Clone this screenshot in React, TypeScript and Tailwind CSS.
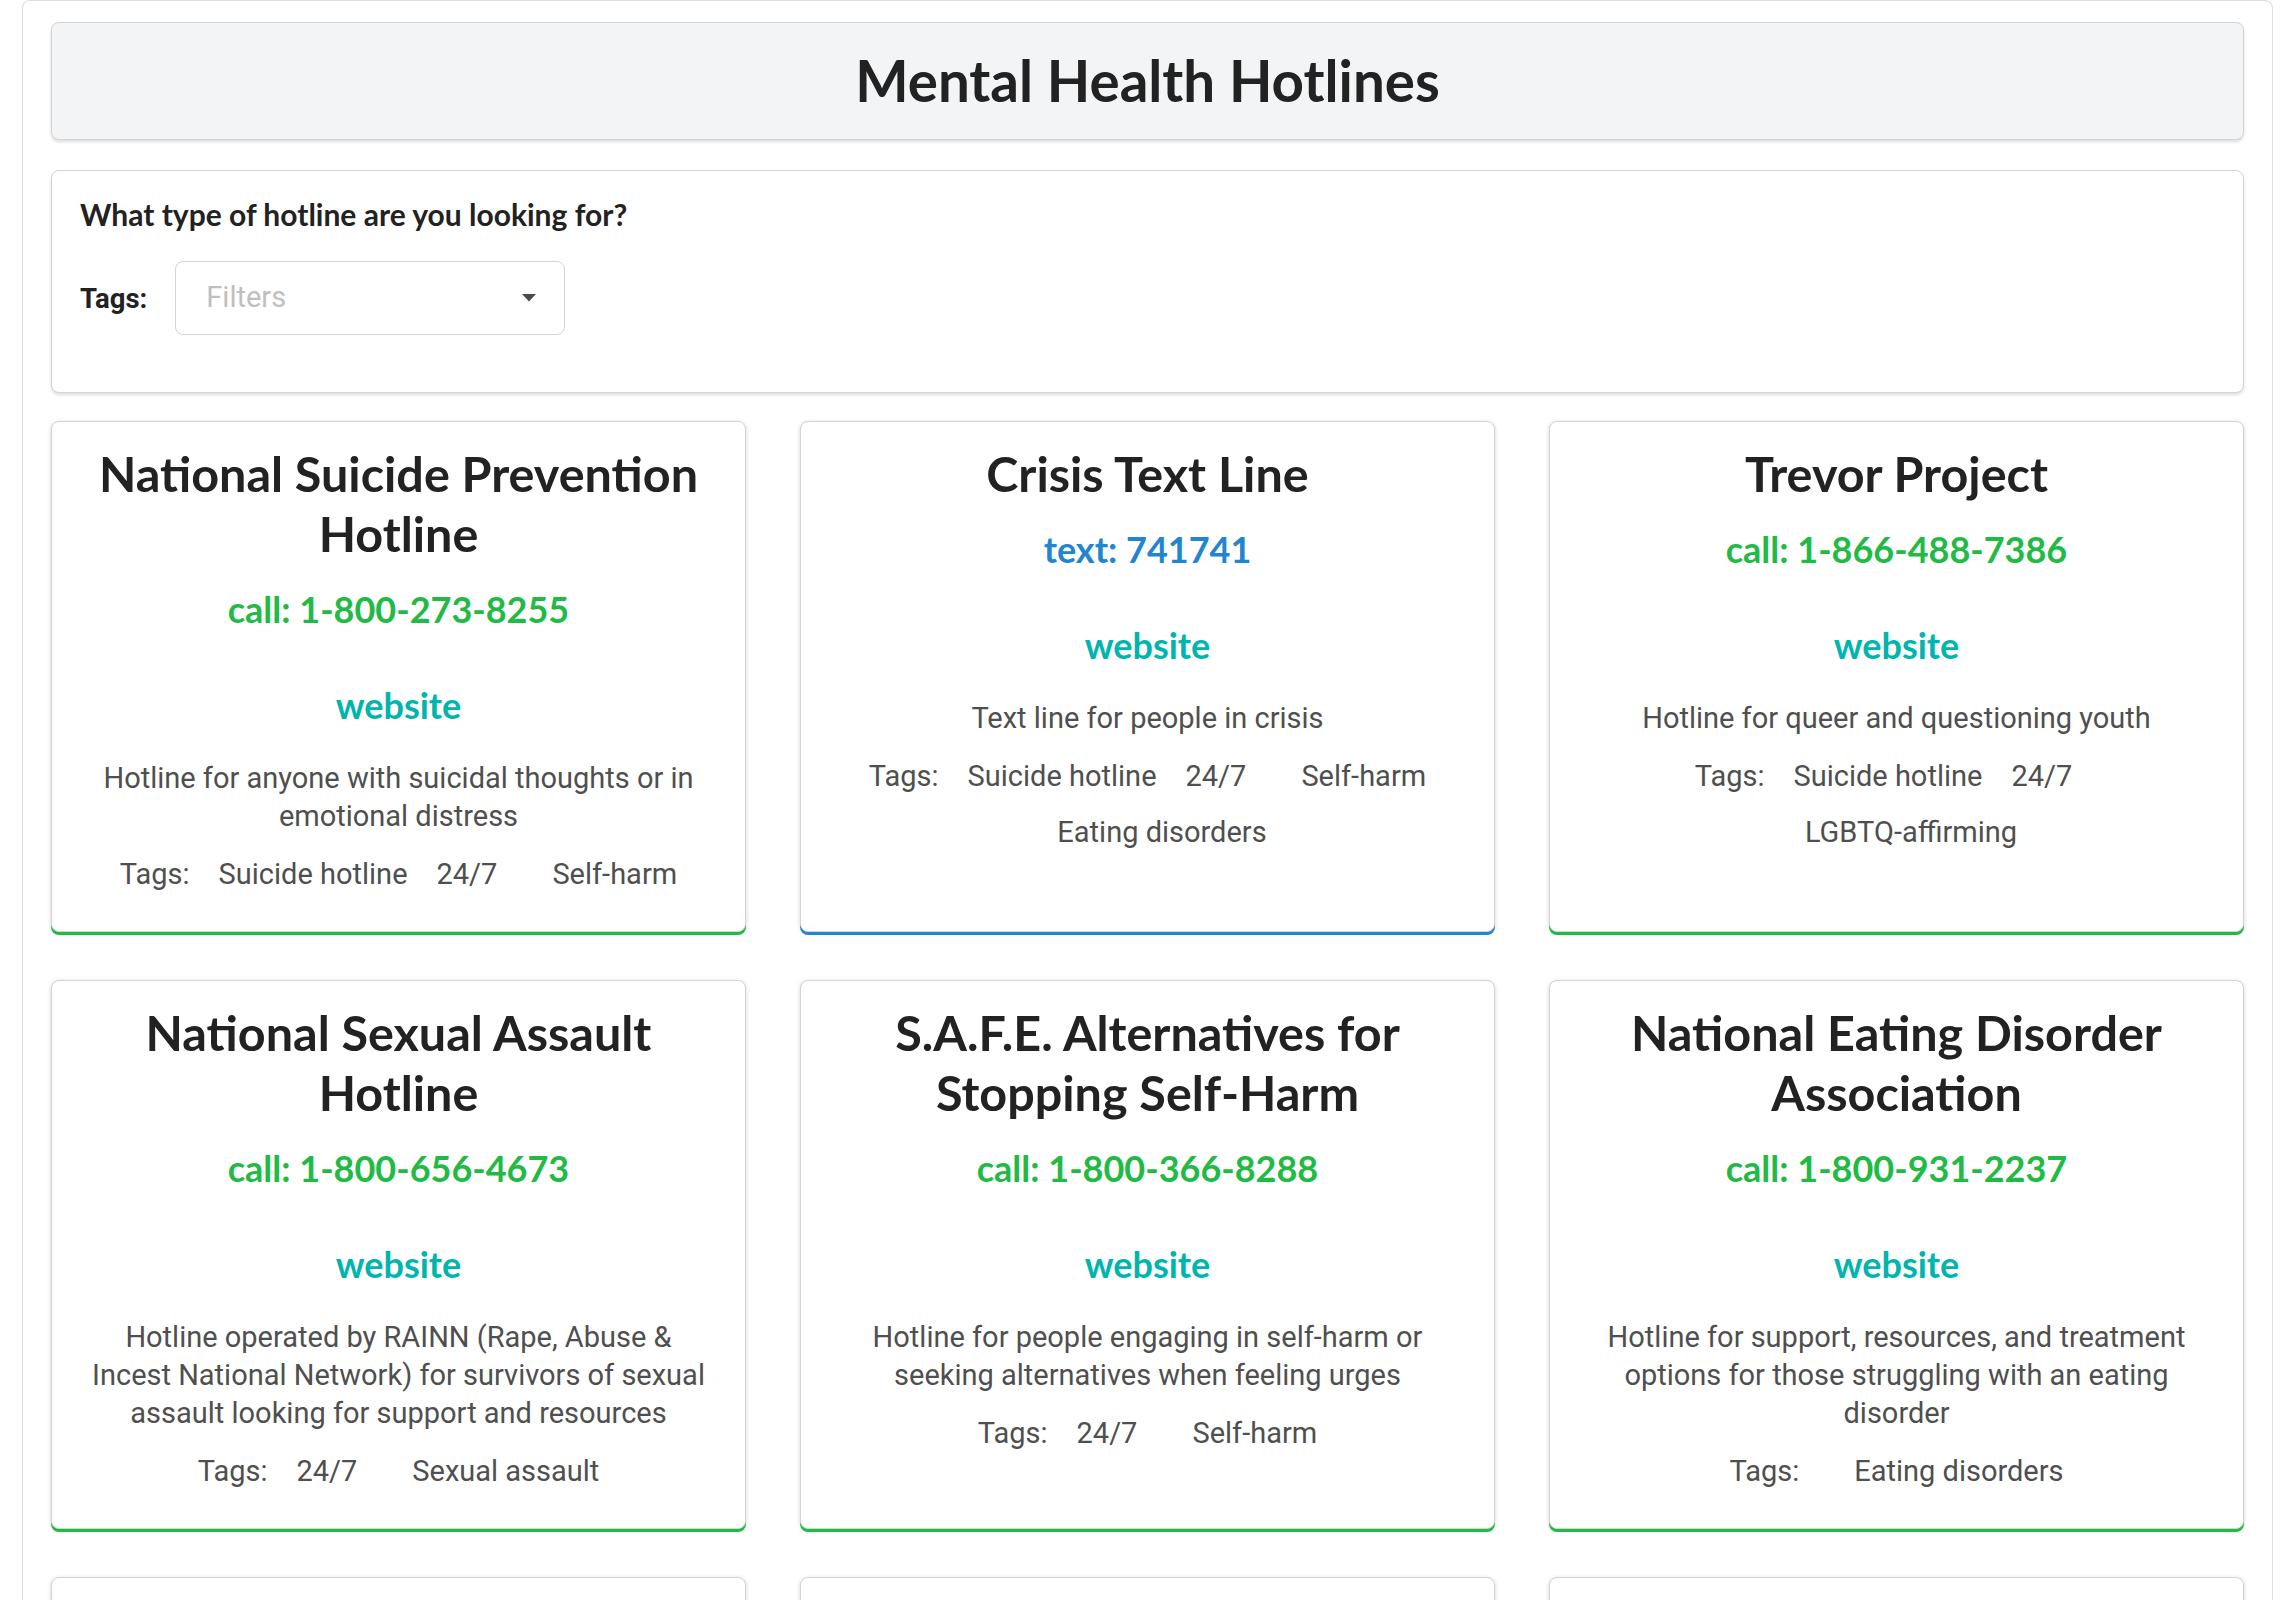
import React from "react";

type Tag = { t: string; cls: string };
type Hotline = {
  title: string[];
  contactLabel: string;
  contactClass: string;
  desc: string[];
  tagRows: Tag[][];
  accent: string;
};

const cards: Hotline[] = [
  {
    title: ["National Suicide Prevention", "Hotline"],
    contactLabel: "call: 1-800-273-8255",
    contactClass: "text-[#21ba45]",
    desc: ["Hotline for anyone with suicidal thoughts or in", "emotional distress"],
    tagRows: [
      [
        { t: "Tags:", cls: "" },
        { t: "Suicide hotline", cls: "ml-[29px]" },
        { t: "24/7", cls: "ml-[29px] mr-[26px]" },
        { t: "Self-harm", cls: "ml-[29px]" },
      ],
    ],
    accent: "shadow-[0_3px_0_0_#21ba45,0_1px_4px_0_#d4d4d5]",
  },
  {
    title: ["Crisis Text Line"],
    contactLabel: "text: 741741",
    contactClass: "text-[#2185d0]",
    desc: ["Text line for people in crisis"],
    tagRows: [
      [
        { t: "Tags:", cls: "" },
        { t: "Suicide hotline", cls: "ml-[29px]" },
        { t: "24/7", cls: "ml-[29px] mr-[26px]" },
        { t: "Self-harm", cls: "ml-[29px]" },
      ],
      [{ t: "Eating disorders", cls: "ml-[29px]" }],
    ],
    accent: "shadow-[0_3px_0_0_#2185d0,0_1px_4px_0_#d4d4d5]",
  },
  {
    title: ["Trevor Project"],
    contactLabel: "call: 1-866-488-7386",
    contactClass: "text-[#21ba45]",
    desc: ["Hotline for queer and questioning youth"],
    tagRows: [
      [
        { t: "Tags:", cls: "" },
        { t: "Suicide hotline", cls: "ml-[29px]" },
        { t: "24/7", cls: "ml-[29px] mr-[26px]" },
      ],
      [{ t: "LGBTQ-affirming", cls: "ml-[29px]" }],
    ],
    accent: "shadow-[0_3px_0_0_#21ba45,0_1px_4px_0_#d4d4d5]",
  },
  {
    title: ["National Sexual Assault", "Hotline"],
    contactLabel: "call: 1-800-656-4673",
    contactClass: "text-[#21ba45]",
    desc: [
      "Hotline operated by RAINN (Rape, Abuse &",
      "Incest National Network) for survivors of sexual",
      "assault looking for support and resources",
    ],
    tagRows: [
      [
        { t: "Tags:", cls: "" },
        { t: "24/7", cls: "ml-[29px] mr-[26px]" },
        { t: "Sexual assault", cls: "ml-[29px]" },
      ],
    ],
    accent: "shadow-[0_3px_0_0_#21ba45,0_1px_4px_0_#d4d4d5]",
  },
  {
    title: ["S.A.F.E. Alternatives for", "Stopping Self-Harm"],
    contactLabel: "call: 1-800-366-8288",
    contactClass: "text-[#21ba45]",
    desc: [
      "Hotline for people engaging in self-harm or",
      "seeking alternatives when feeling urges",
    ],
    tagRows: [
      [
        { t: "Tags:", cls: "" },
        { t: "24/7", cls: "ml-[29px] mr-[26px]" },
        { t: "Self-harm", cls: "ml-[29px]" },
      ],
    ],
    accent: "shadow-[0_3px_0_0_#21ba45,0_1px_4px_0_#d4d4d5]",
  },
  {
    title: ["National Eating Disorder", "Association"],
    contactLabel: "call: 1-800-931-2237",
    contactClass: "text-[#21ba45]",
    desc: [
      "Hotline for support, resources, and treatment",
      "options for those struggling with an eating",
      "disorder",
    ],
    tagRows: [
      [
        { t: "Tags:", cls: "" },
        { t: "Eating disorders", cls: "ml-[55px]" },
      ],
    ],
    accent: "shadow-[0_3px_0_0_#21ba45,0_1px_4px_0_#d4d4d5]",
  },
];

function HotlineCard({ c }: { c: Hotline }) {
  return (
    <div
      className={`flex flex-col rounded-[8px] border border-[#d4d4d5] bg-white px-[28px] pt-[21px] pb-[38px] text-center ${c.accent}`}
    >
      <div className="font-['Lato',sans-serif] text-[48.5px] font-bold leading-[60px] text-[#222222]">
        {c.title.map((l, i) => (
          <div key={i}>{l}</div>
        ))}
      </div>
      <div
        className={`mt-[22px] font-['Lato',sans-serif] text-[36px] font-bold leading-[48px] ${c.contactClass}`}
      >
        {c.contactLabel}
      </div>
      <div className="mt-[48px] font-['Lato',sans-serif] text-[36px] font-bold leading-[48px] text-[#00b5ad]">
        website
      </div>
      <div className="mt-[30px] font-['Roboto',sans-serif] text-[29px] leading-[38px] text-[#4f4f4f]">
        {c.desc.map((l, i) => (
          <div key={i} className="whitespace-nowrap">
            {l}
          </div>
        ))}
      </div>
      <div className="mt-[20px] flex flex-col gap-[18px] font-['Roboto',sans-serif] text-[29px] leading-[38px] text-[#4f4f4f]">
        {c.tagRows.map((row, i) => (
          <div key={i} className="flex justify-center whitespace-nowrap">
            {row.map((t, j) => (
              <span key={j} className={t.cls}>
                {t.t}
              </span>
            ))}
          </div>
        ))}
      </div>
    </div>
  );
}

function EmptyCard({ accent }: { accent: string }) {
  return (
    <div
      className={`h-[510px] rounded-[8px] border border-[#d4d4d5] bg-white ${accent}`}
    />
  );
}

export default function App() {
  return (
    <div className="min-h-screen bg-white px-[22px]">
      <div className="min-h-[1700px] rounded-t-[8px] border border-b-0 border-[#dedede] px-[28px] pt-[21px] pb-[40px]">
        <div className="flex h-[118px] items-center justify-center rounded-[8px] border border-[#d4d4d5] bg-[#f3f4f5] shadow-[0_2px_3px_0_rgba(34,36,38,0.15)]">
          <h1 className="font-['Lato',sans-serif] text-[56.5px] font-bold leading-[1.2] text-[#222222]">
            Mental Health Hotlines
          </h1>
        </div>

        <div className="mt-[30px] rounded-[8px] border border-[#d4d4d5] bg-white px-[28px] pt-[24px] pb-[57px] shadow-[0_2px_3px_0_rgba(34,36,38,0.15)]">
          <div className="font-['Lato',sans-serif] text-[30px] font-bold leading-[38px] text-[#222222]">
            What type of hotline are you looking for?
          </div>
          <div className="mt-[28px] flex items-center">
            <span className="font-['Roboto',sans-serif] text-[27.5px] font-bold leading-[1.2] text-[#222222]">
              Tags:
            </span>
            <div className="ml-[28px] flex h-[74px] w-[390px] items-center justify-between rounded-[8px] border border-[#d4d4d5] bg-white pl-[30px] pr-[28px]">
              <span className="font-['Roboto',sans-serif] text-[29px] text-[#bfbfbf]">
                Filters
              </span>
              <svg width="14" height="8" viewBox="0 0 14 8" className="block">
                <path d="M0 0 L14 0 L7 7.5 Z" fill="#4a4a4a" />
              </svg>
            </div>
          </div>
        </div>

        <div className="mt-[28px] grid grid-cols-3 gap-x-[54px] gap-y-[48px]">
          {cards.map((c, i) => (
            <HotlineCard key={i} c={c} />
          ))}
          <EmptyCard accent="shadow-[0_3px_0_0_#21ba45,0_1px_4px_0_#d4d4d5]" />
          <EmptyCard accent="shadow-[0_3px_0_0_#21ba45,0_1px_4px_0_#d4d4d5]" />
          <EmptyCard accent="shadow-[0_3px_0_0_#21ba45,0_1px_4px_0_#d4d4d5]" />
        </div>
      </div>
    </div>
  );
}
